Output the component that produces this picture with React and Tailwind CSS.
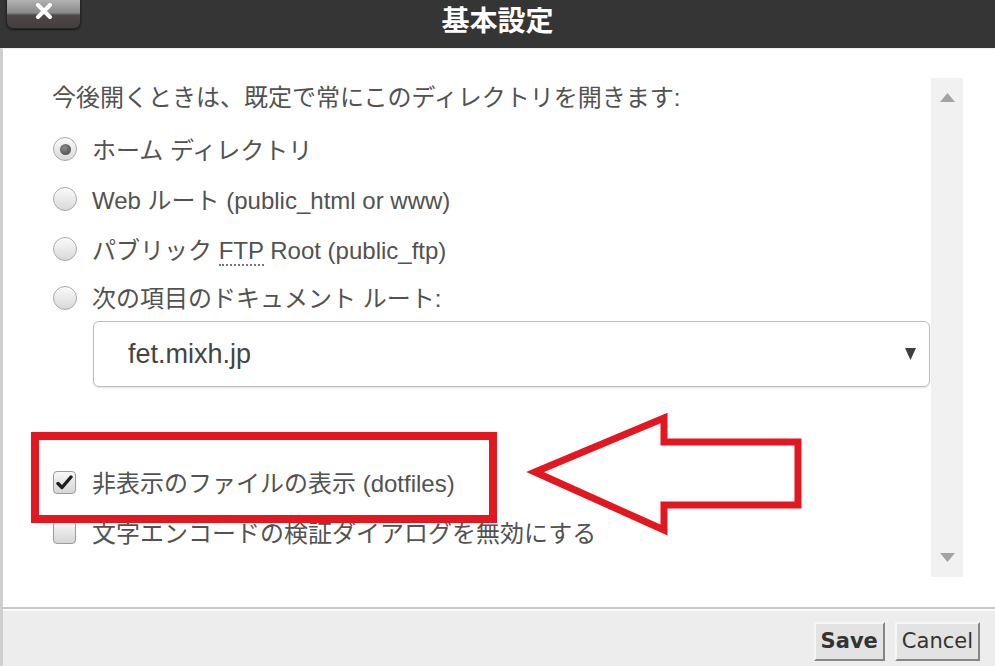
import React from 'react';

const BODY_FONT = "font-['Liberation_Sans','Noto_Sans_CJK_JP',sans-serif]";

function Radio({ checked }) {
  return (
    <span className="ml-[1px] flex h-[24px] w-[24px] shrink-0 items-center justify-center rounded-full border border-[#a8a8a8] bg-[linear-gradient(#fafafa,#d9d9d9)] shadow-[inset_0_1px_1px_rgba(255,255,255,0.9)]">
      {checked && <span className="h-[11px] w-[11px] rounded-full bg-[radial-gradient(circle_at_40%_35%,#8c8c8c,#404040)]" />}
    </span>
  );
}

function Checkbox({ checked }) {
  return (
    <span className="ml-[1px] flex h-[23px] w-[23px] shrink-0 items-center justify-center rounded-[4px] border border-[#9c9c9c] bg-[linear-gradient(#f7f7f7,#d6d6d6)]">
      {checked && (
        <svg width="17" height="15" viewBox="0 0 17 15">
          <path d="M2 8.5 L6 12.5 L15 2" fill="none" stroke="#1f1f1f" strokeWidth="3.4" strokeLinecap="round" strokeLinejoin="round" />
        </svg>
      )}
    </span>
  );
}

function RadioRow({ checked, children, h = 'h-[50px]' }) {
  return (
    <div className={`flex ${h} items-center gap-[15px]`}>
      <Radio checked={checked} />
      <span className="whitespace-nowrap pt-[3px]">{children}</span>
    </div>
  );
}

export default function App() {
  return (
    <div className={`relative flex h-[666px] w-[995px] flex-col overflow-hidden bg-white ${BODY_FONT}`}>
      {/* Header */}
      <div className="grid h-[48px] shrink-0 grid-cols-[1fr_auto_1fr] bg-[#353535]">
        <div className="flex items-start">
          <button className="ml-[6px] flex h-[29px] w-[75px] items-center justify-center rounded-b-[7px] border border-t-0 border-[#262626] bg-[linear-gradient(#b2b2b2_0%,#8a8a8a_45%,#4e4747_55%,#433d3d_100%)] shadow-[0_1px_2px_rgba(0,0,0,0.6)]">
            <svg width="18" height="16" viewBox="0 0 18 16" className="-mt-[6px]">
              <path d="M3 2 L15 14 M15 2 L3 14" stroke="#ffffff" strokeWidth="4" strokeLinecap="round" />
            </svg>
          </button>
        </div>
        <h1 className="-mt-[2px] text-[28px] font-bold leading-[42px] text-white font-['Noto_Sans_CJK_JP',sans-serif]">基本設定</h1>
        <div />
      </div>

      {/* Body */}
      <div className="flex min-h-0 flex-1 border-l-[3px] border-[#cfcfcf] border-t border-t-[#ededed]">
        <div className="w-[928px] shrink-0 pl-[49px] pt-[34px] text-[24px] text-[#525252]">
          <p className="h-[30px] whitespace-nowrap leading-[30px]">今後開くときは、既定で常にこのディレクトリを開きます:</p>
          <div className="mt-[11px]">
            <RadioRow checked>ホーム ディレクトリ</RadioRow>
            <RadioRow>Web ルート (public_html or www)</RadioRow>
            <RadioRow>
              パブリック <abbr className="no-underline border-b-2 border-dotted border-[#777] leading-none">FTP</abbr> Root (public_ftp)
            </RadioRow>
            <RadioRow h="h-[47px]">次の項目のドキュメント ルート:</RadioRow>
          </div>
          <div className="ml-[41px] flex h-[66px] w-[837px] items-center justify-between rounded-[6px] border border-[#bcbcbc] pl-[34px] pr-[13px] shadow-[0_1px_2px_rgba(0,0,0,0.12)]">
            <span className="text-[27px] text-[#444]">fet.mixh.jp</span>
            <svg width="11" height="12" viewBox="0 0 11 12">
              <path d="M0 0 H11 L5.5 12 Z" fill="#3d3d3d" />
            </svg>
          </div>
          <div className="mt-[70px]">
            <div className="flex h-[50px] items-center gap-[16px]">
              <Checkbox checked />
              <span className="whitespace-nowrap pt-[4px]">非表示のファイルの表示 (dotfiles)</span>
            </div>
            <div className="flex h-[50px] items-center gap-[16px]">
              <Checkbox />
              <span className="whitespace-nowrap pt-[4px]">文字エンコードの検証ダイアログを無効にする</span>
            </div>
          </div>
        </div>

        {/* Scrollbar */}
        <div className="mt-[29px] flex h-[499px] w-[32px] shrink-0 flex-col items-center justify-between bg-[#f1f1f1] py-[15px]">
          <svg width="15" height="9" viewBox="0 0 15 9">
            <path d="M0 9 L7.5 0 L15 9 Z" fill="#a3a3a3" />
          </svg>
          <svg width="15" height="9" viewBox="0 0 15 9">
            <path d="M0 0 H15 L7.5 9 Z" fill="#a3a3a3" />
          </svg>
        </div>
      </div>

      {/* Footer */}
      <div className="flex h-[59px] shrink-0 items-start justify-end gap-[10px] border-l-[3px] border-t-2 border-[#c8c8c8] border-l-[#cfcfcf] bg-[#ededed] pr-[15px] pt-[13px] shadow-[inset_0_2px_0_#fafafa] font-['DejaVu_Sans',sans-serif]">
        <button className="h-[39px] border-2 border-b-[#858585] border-l-[#f6f6f6] border-r-[#858585] border-t-[#f6f6f6] bg-[#e3e3e3] px-[5px] text-[21px] font-bold text-[#333]">Save</button>
        <button className="h-[39px] border-2 border-b-[#858585] border-l-[#f6f6f6] border-r-[#858585] border-t-[#f6f6f6] bg-[#e3e3e3] px-[5px] text-[21px] text-[#333]">Cancel</button>
      </div>

      {/* Annotation: red box */}
      <div className="pointer-events-none absolute left-[31px] top-[432px] h-[91px] w-[466px] border-[8px] border-[#e3171f]" />

      {/* Annotation: red arrow */}
      <svg className="pointer-events-none absolute left-0 top-0" width="995" height="666" viewBox="0 0 995 666">
        <polygon
          points="535,472 664,418 664,442 798,442 798,505 664,505 664,530"
          fill="none"
          stroke="#e3171f"
          strokeWidth="7"
          strokeLinejoin="miter"
        />
      </svg>
    </div>
  );
}
